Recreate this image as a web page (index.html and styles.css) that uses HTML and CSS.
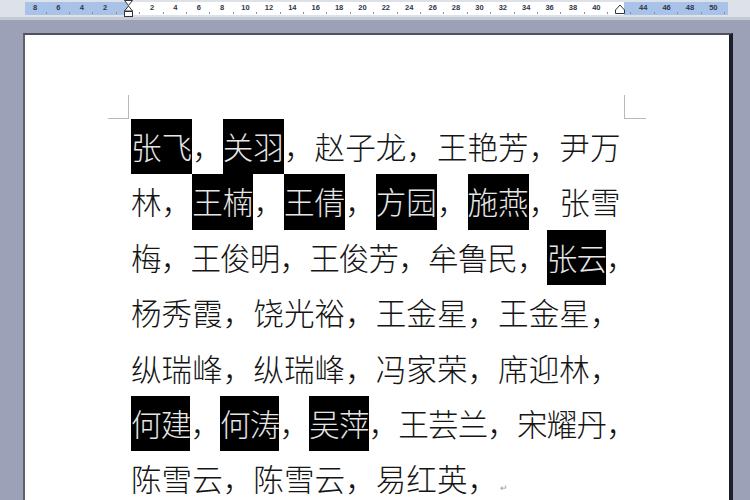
FILE: index.html
```html
<!DOCTYPE html>
<html lang="zh">
<head>
<meta charset="utf-8">
<title>文档</title>
<link rel="stylesheet" href="styles.css">
</head>
<body>
<div class="ruler">
  <div class="track">
    <div class="scale">
      <span class="cell">8</span><span class="cell">6</span><span class="cell">4</span><span class="cell">2</span>
      <span class="cell mark"><svg width="9" height="17" viewBox="0 0 9 17"><path d="M0.5 0.5 H8.5 L4.5 5.5 Z" fill="#fff" stroke="#333"/><path d="M4.5 6 L8.5 11 H0.5 Z" fill="#fff" stroke="#333"/><rect x="0.5" y="11.5" width="8" height="5" fill="#fff" stroke="#333"/></svg></span>
      <span class="cell">2</span><span class="cell">4</span><span class="cell">6</span><span class="cell">8</span><span class="cell">10</span>
      <span class="cell">12</span><span class="cell">14</span><span class="cell">16</span><span class="cell">18</span><span class="cell">20</span>
      <span class="cell">22</span><span class="cell">24</span><span class="cell">26</span><span class="cell">28</span><span class="cell">30</span>
      <span class="cell">32</span><span class="cell">34</span><span class="cell">36</span><span class="cell">38</span><span class="cell">40</span>
      <span class="cell mark tri"><svg width="10" height="10" viewBox="0 0 10 10"><path d="M0.5 9.5 V6 L5 1 L9.5 6 V9.5 Z" fill="#fff" stroke="#333"/></svg></span>
      <span class="cell">44</span><span class="cell">46</span><span class="cell">48</span><span class="cell">50</span>
    </div>
  </div>
</div>
<div class="ruler-edge"></div>
<div class="desk">
  <div class="page">
    <div class="marks">
      <span class="crop crop-left"></span>
      <span class="crop crop-right"></span>
    </div>
    <div class="text">
      <div class="line"><span class="hl">张飞</span>，<span class="hl">关羽</span>，赵子龙，王艳芳，尹万</div>
      <div class="line">林，<span class="hl">王楠</span>，<span class="hl">王倩</span>，<span class="hl">方园</span>，<span class="hl">施燕</span>，张雪</div>
      <div class="line tight">梅，王俊明，王俊芳，牟鲁民，<span class="hl">张云</span>，</div>
      <div class="line">杨秀霞，饶光裕，王金星，王金星，</div>
      <div class="line">纵瑞峰，纵瑞峰，冯家荣，席迎林，</div>
      <div class="line tight"><span class="hl">何建</span>，<span class="hl">何涛</span>，<span class="hl">吴萍</span>，王芸兰，宋耀丹，</div>
      <div class="line">陈雪云，陈雪云，易红英，<span class="ret">↵</span></div>
    </div>
  </div>
</div>
</body>
</html>
```
FILE: styles.css
```css
html, body {
  margin: 0;
  padding: 0;
}
body {
  background: #9da1b8;
  width: 750px;
  height: 500px;
  overflow: hidden;
  font-family: "Noto Sans CJK SC", "Noto Sans", sans-serif;
}
.ruler {
  height: 15px;
  padding-top: 2px;
  background: #dde2ea;
}
.track {
  margin-left: 25px;
  width: 703px;
  height: 13px;
  background: linear-gradient(to right, #a8c2e8 0, #a8c2e8 103px, #ffffff 103px, #ffffff 599px, #a8c2e8 599px, #a8c2e8 703px);
}
.scale {
  display: flex;
  margin-left: -1.7px;
  height: 13px;
}
.cell {
  flex: none;
  width: 23.4px;
  height: 13px;
  position: relative;
  text-align: center;
  font-family: "Liberation Sans", sans-serif;
  font-size: 7.5px;
  font-weight: bold;
  line-height: 12px;
  color: #30354a;
}
.cell::after {
  content: "";
  position: absolute;
  right: 0;
  bottom: 1px;
  width: 1px;
  height: 2px;
  background: #8a8f9c;
}
.cell.mark {
  display: flex;
  justify-content: center;
  align-items: flex-start;
}
.cell.mark svg {
  display: block;
  margin-top: -2px;
}
.cell.tri svg {
  margin-top: 2px;
}
.ruler-edge {
  height: 3px;
  background: #c7cad5;
}
.desk {
  padding-top: 13px;
}
.page {
  margin-left: 23px;
  width: 704px;
  height: 405px;
  overflow: hidden;
  background: #ffffff;
  border-left: 2px solid #5d6070;
  border-top: 2px solid #4e5160;
  border-right: 4px solid #1c1d2b;
  padding-top: 60px;
  box-sizing: content-box;
}
.marks {
  display: flex;
  justify-content: space-between;
  margin-left: 83px;
  width: 538px;
  height: 24px;
}
.crop {
  display: block;
  height: 23px;
  border-bottom: 1px solid #b9b9b9;
}
.crop-left {
  width: 20px;
  border-right: 1px solid #b9b9b9;
}
.crop-right {
  width: 21px;
  border-left: 1px solid #b9b9b9;
}
.text {
  margin-left: 106px;
  color: #151515;
  font-size: 30.6px;
  font-weight: 300;
}
.line {
  height: 55.4px;
  line-height: 55.4px;
  white-space: nowrap;
}
.line.tight {
  letter-spacing: -0.9px;
}
.hl {
  display: inline-block;
  background: #000000;
  color: #e6e6e6;
  height: 55.4px;
  line-height: 55.4px;
  vertical-align: top;
}
.ret {
  font-family: "DejaVu Sans", sans-serif;
  font-size: 9px;
  color: #9a9a9a;
  margin-left: 2px;
}
```
